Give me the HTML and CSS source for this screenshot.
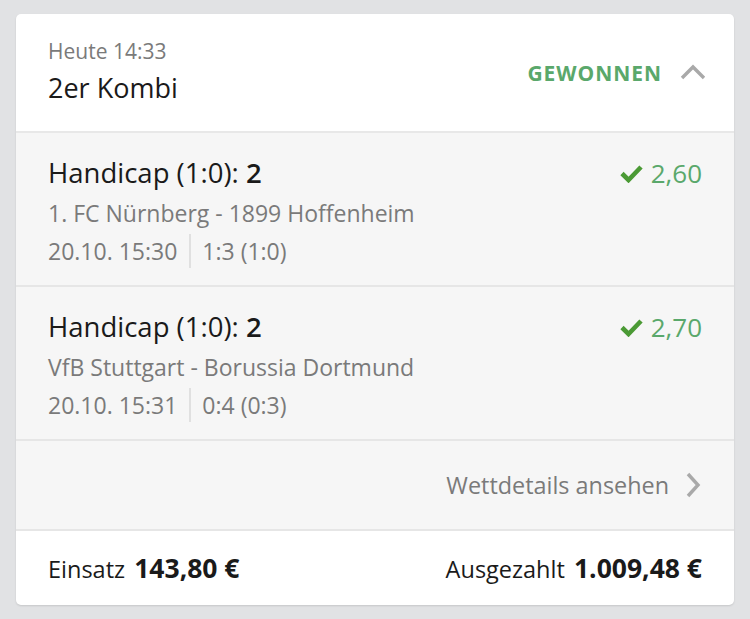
FILE: index.html
```html
<!DOCTYPE html>
<html lang="de">
<head>
    <meta charset="UTF-8">
    <meta name="viewport" content="width=device-width, initial-scale=1.0">
    <title>2er Kombi</title>
    <link rel="stylesheet" href="styles.css">
</head>
<body>
    <div class="card">
        <div class="card-head">
            <div>
                <div class="bet-time">Heute 14:33</div>
                <div class="bet-title">2er Kombi</div>
            </div>
            <div class="bet-status">
                <span class="status-text">GEWONNEN</span>
                <svg class="chevron-up" width="26" height="16" viewBox="0 0 26 16">
                    <path d="M2 14 L13 3 L24 14" fill="none" stroke="#a9a9a9" stroke-width="3.4"/>
                </svg>
            </div>
        </div>

        <div class="leg">
            <div class="leg-top">
                <div class="market">Handicap (1:0): <b>2</b></div>
                <div class="odds">
                    <svg class="check" width="23" height="19" viewBox="0 0 23 19">
                        <path d="M2 9.5 L8.5 16 L21 3" fill="none" stroke="#4b9a35" stroke-width="4.6"/>
                    </svg>
                    2,60
                </div>
            </div>
            <div class="teams">1. FC Nürnberg - 1899 Hoffenheim</div>
            <div class="meta">
                <span>20.10. 15:30</span>
                <span class="sep"></span>
                <span>1:3 (1:0)</span>
            </div>
        </div>

        <div class="leg">
            <div class="leg-top">
                <div class="market">Handicap (1:0): <b>2</b></div>
                <div class="odds">
                    <svg class="check" width="23" height="19" viewBox="0 0 23 19">
                        <path d="M2 9.5 L8.5 16 L21 3" fill="none" stroke="#4b9a35" stroke-width="4.6"/>
                    </svg>
                    2,70
                </div>
            </div>
            <div class="teams">VfB Stuttgart - Borussia Dortmund</div>
            <div class="meta">
                <span>20.10. 15:31</span>
                <span class="sep"></span>
                <span>0:4 (0:3)</span>
            </div>
        </div>

        <div class="details-row">
            <span>Wettdetails ansehen</span>
            <svg class="chevron-right" width="16" height="26" viewBox="0 0 16 26">
                <path d="M3 2 L13 13 L3 24" fill="none" stroke="#a9a9a9" stroke-width="3.4"/>
            </svg>
        </div>

        <div class="card-foot">
            <div>Einsatz <b class="amount">143,80 €</b></div>
            <div>Ausgezahlt <b class="amount">1.009,48 €</b></div>
        </div>
    </div>
</body>
</html>
```

FILE: styles.css
```css
body {
    margin: 0;
    padding: 14px 16px;
    background-color: #e1e2e4;
    font-family: "Open Sans", sans-serif;
    color: #1a1a1a;
}
.card {
    background-color: white;
    border-radius: 5px;
    box-shadow: 0 1px 2px rgba(0,0,0,0.12);
    overflow: hidden;
}
.card-head {
    display: flex;
    justify-content: space-between;
    align-items: center;
    height: 119px;
    padding: 0 28px 0 32px;
    border-bottom: 2px solid #e8e8e8;
    box-sizing: border-box;
}
.bet-time {
    font-size: 21px;
    color: #7a7a7a;
    line-height: 26px;
}
.bet-title {
    font-size: 27px;
    line-height: 38px;
    margin-top: 5px;
}
.bet-status {
    display: flex;
    align-items: center;
    gap: 18px;
}
.status-text {
    color: #5aa86b;
    font-weight: bold;
    font-size: 21px;
    letter-spacing: 0.95px;
}
.chevron-up {
    margin-top: -2px;
}
.leg {
    background-color: #f6f6f6;
    padding: 21px 32px 0;
    height: 154px;
    box-sizing: border-box;
    border-bottom: 2px solid #e6e6e6;
}
.leg-top {
    display: flex;
    justify-content: space-between;
    align-items: center;
}
.market {
    font-size: 27.5px;
    line-height: 38px;
}
.market b {
    font-weight: 600;
}
.odds {
    display: flex;
    align-items: center;
    gap: 8px;
    color: #5aa86b;
    font-size: 26px;
}
.teams {
    font-size: 23px;
    color: #7a7a7a;
    line-height: 32px;
    margin-top: 5px;
}
.meta {
    display: flex;
    align-items: center;
    font-size: 23px;
    color: #7a7a7a;
    line-height: 36px;
    margin-top: 4px;
}
.sep {
    width: 2px;
    height: 34px;
    background-color: #e0e0e0;
    margin: 0 11px 0 12px;
}
.details-row {
    display: flex;
    justify-content: flex-end;
    align-items: center;
    gap: 16px;
    background-color: #f6f6f6;
    height: 90px;
    padding: 0 33px;
    border-bottom: 2px solid #e6e6e6;
    font-size: 23.4px;
    color: #7a7a7a;
    box-sizing: border-box;
}
.card-foot {
    display: flex;
    justify-content: space-between;
    align-items: center;
    height: 74px;
    padding: 0 32px;
    font-size: 23.5px;
}
.amount {
    font-size: 26.5px;
    font-weight: 700;
    margin-left: 3px;
}
```
